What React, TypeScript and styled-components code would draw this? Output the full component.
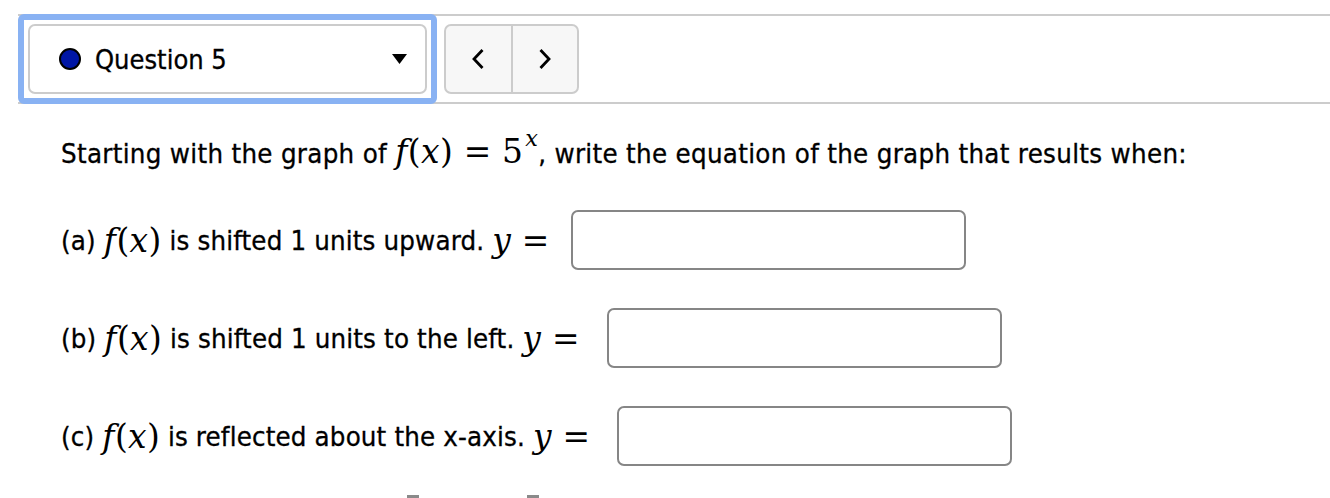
import React from "react";
import styled, { createGlobalStyle } from "styled-components";

const GlobalStyle = createGlobalStyle`
  html, body {
    margin: 0;
    padding: 0;
    background: #fff;
    overflow: hidden;
  }
  body {
    font-family: "DejaVu Sans Condensed", "DejaVu Sans", sans-serif;
    color: #000;
    -webkit-text-stroke: 0.3px #000;
  }
`;

const Page = styled.div`
  padding-top: 14px;
  width: 1330px;
  height: 498px;
  box-sizing: border-box;
`;

const NavBand = styled.div`
  display: flex;
  align-items: center;
  gap: 7px;
  margin-left: 18px;
  height: 90px;
  box-sizing: border-box;
  border-top: 2px solid #cccccc;
  border-bottom: 2px solid #cccccc;
`;

const FocusRing = styled.div`
  margin: -2px 0;
  width: 419px;
  height: 90px;
  box-sizing: border-box;
  border: 6px solid #89b2f3;
  border-radius: 6px;
  padding: 4px;
  background: #fff;
`;

const QuestionSelect = styled.div`
  display: flex;
  align-items: center;
  height: 100%;
  box-sizing: border-box;
  border: 2px solid #cccccc;
  border-radius: 7px;
  padding: 0 18px 0 29px;
  font-size: 27px;
`;

const StatusDot = styled.span`
  width: 22px;
  height: 22px;
  box-sizing: border-box;
  border-radius: 50%;
  border: 2px solid #000;
  background: #0016a6;
  margin-right: 14px;
  flex-shrink: 0;
`;

const SelectLabel = styled.span`
  flex: 1;
`;

const Pager = styled.div`
  display: flex;
  width: 135px;
  height: 70px;
  box-sizing: border-box;
  border: 2px solid #cccccc;
  border-radius: 7px;
  background: #f7f7f7;
  overflow: hidden;
`;

const PagerButton = styled.button<{ $divider?: boolean }>`
  flex: 1;
  display: flex;
  align-items: center;
  justify-content: center;
  border: 0;
  padding: 0;
  background: transparent;
  border-right: ${(p) => (p.$divider ? "2px solid #cccccc" : "0")};
`;

const Content = styled.div`
  padding: 28px 0 0 61px;
`;

const Prompt = styled.p`
  margin: 0;
  font-size: 27.4px;
  letter-spacing: 0.3px;
  line-height: 40px;
`;

const Parts = styled.div`
  display: flex;
  flex-direction: column;
  gap: 38px;
  margin-top: 36px;
`;

const PartRow = styled.div`
  display: flex;
  align-items: center;
  height: 60px;
  font-size: 27.4px;
  letter-spacing: 0.15px;
`;

const MathVar = styled.span`
  font-family: "DejaVu Serif", "Liberation Serif", serif;
  font-style: italic;
  font-size: 1.2em;
  letter-spacing: 0.5px;
  -webkit-text-stroke: 0;
`;

const MathText = styled.span`
  font-family: "DejaVu Serif", "Liberation Serif", serif;
  font-size: 1.2em;
  -webkit-text-stroke: 0;
`;

const MathOp = styled(MathText)`
  padding: 0 0.32em;
`;

const Sup = styled.sup`
  font-family: "DejaVu Serif", "Liberation Serif", serif;
  font-style: italic;
  font-size: 0.82em;
  vertical-align: 0.75em;
  line-height: 0;
  margin-left: 2px;
  -webkit-text-stroke: 0;
`;

const AnswerBox = styled.input<{ $nudge: number }>`
  width: 395px;
  height: 60px;
  box-sizing: border-box;
  margin-left: ${(p) => 14 + p.$nudge}px;
  border: 2px solid #868686;
  border-radius: 7px;
  background: #fff;
  outline: none;
  font-size: 24px;
  padding: 0 10px;
`;

const NextRow = styled.div`
  display: flex;
  margin: 29px 0 0 346px;
  gap: 108px;
`;

const Stub = styled.span`
  width: 12px;
  height: 8px;
  background: #8a8a8a;
`;

function Chevron({ dir }: { dir: "left" | "right" }) {
  const d = dir === "left" ? "M10.5 1 L2 10 L10.5 19" : "M1.5 1 L10 10 L1.5 19";
  return (
    <svg width="12" height="20" viewBox="0 0 12 20">
      <path d={d} fill="none" stroke="#000" strokeWidth="2.8" />
    </svg>
  );
}

function Fx() {
  return (
    <>
      <MathVar>f</MathVar>
      <MathText>(</MathText>
      <MathVar>x</MathVar>
      <MathText>)</MathText>
    </>
  );
}

const parts = [
  { key: "a", text: "is shifted 1 units upward.", nudge: -3 },
  { key: "b", text: "is shifted 1 units to the left.", nudge: 3 },
  { key: "c", text: "is reflected about the x-axis.", nudge: 2 },
];

export default function App() {
  return (
    <Page>
      <GlobalStyle />
      <NavBand>
        <FocusRing>
          <QuestionSelect>
            <StatusDot />
            <SelectLabel>Question 5</SelectLabel>
            <svg width="15" height="10" viewBox="0 0 15 10">
              <polygon points="0,0 15,0 7.5,10" fill="#000" />
            </svg>
          </QuestionSelect>
        </FocusRing>
        <Pager>
          <PagerButton $divider aria-label="Previous question">
            <Chevron dir="left" />
          </PagerButton>
          <PagerButton aria-label="Next question">
            <Chevron dir="right" />
          </PagerButton>
        </Pager>
      </NavBand>
      <Content>
        <Prompt>
          Starting with the graph of <Fx />
          <MathOp>=</MathOp>
          <MathText>5</MathText>
          <Sup>x</Sup>, write the equation of the graph that results when:
        </Prompt>
        <Parts>
          {parts.map((p) => (
            <PartRow key={p.key}>
              <span>({p.key})&nbsp;</span>
              <Fx />
              <span>&nbsp;{p.text}&nbsp;</span>
              <MathVar>y</MathVar>
              <MathOp>=</MathOp>
              <AnswerBox $nudge={p.nudge} type="text" aria-label={`answer ${p.key}`} />
            </PartRow>
          ))}
        </Parts>
        <NextRow>
          <Stub />
          <Stub />
        </NextRow>
      </Content>
    </Page>
  );
}
